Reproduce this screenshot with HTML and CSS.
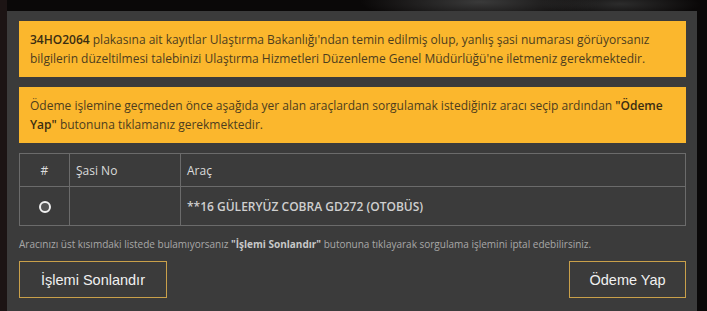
FILE: index.html
```html
<!DOCTYPE html>
<html lang="tr">
  <head>
    <meta charset="UTF-8" />
    <meta name="viewport" content="width=device-width, initial-scale=1.0" />
    <title>Ödeme</title>
    <link rel="stylesheet" href="styles.css">
  </head>
  <body>
    <div class="modal">
      <div class="notice">
        <b>34HO2064</b> plakasına ait kayıtlar Ulaştırma Bakanlığı'ndan temin edilmiş olup, yanlış şasi numarası görüyorsanız
        bilgilerin düzeltilmesi talebinizi Ulaştırma Hizmetleri Düzenleme Genel Müdürlüğü'ne iletmeniz gerekmektedir.
      </div>
      <div class="notice">
        Ödeme işlemine geçmeden önce aşağıda yer alan araçlardan sorgulamak istediğiniz aracı seçip ardından <b>"Ödeme
        Yap"</b> butonuna tıklamanız gerekmektedir.
      </div>
      <table class="vehicles">
        <tr>
          <th class="sel">#</th>
          <th class="chassis">Şasi No</th>
          <th>Araç</th>
        </tr>
        <tr>
          <td class="sel"><span class="radio"></span></td>
          <td></td>
          <td class="car">**16 GÜLERYÜZ COBRA GD272 (OTOBÜS)</td>
        </tr>
      </table>
      <p class="hint">Aracınızı üst kısımdaki listede bulamıyorsanız <b>"İşlemi Sonlandır"</b> butonuna tıklayarak sorgulama işlemini iptal edebilirsiniz.</p>
      <div class="actions">
        <button class="btn btn-cancel">İşlemi Sonlandır</button>
        <button class="btn btn-pay">Ödeme Yap</button>
      </div>
    </div>
  </body>
</html>
```

FILE: styles.css
```css
body,
html {
  height: 100%;
  margin: 0;
}

body {
  background-color: #080808;
  background-image: radial-gradient(ellipse 120px 20px at 480px 2px, #3a3a3a, transparent),
    radial-gradient(ellipse 80px 14px at 620px 4px, #2c2c2c, transparent),
    linear-gradient(to right, #1c1414 7px, #0a0808 7px);
  font-family: "Open Sans", "Noto Sans", sans-serif;
  overflow: hidden;
}

.modal {
  box-sizing: border-box;
  width: 690px;
  height: 300px;
  margin: 11px 0 0 7px;
  padding: 10px 11px 0 12px;
  background-color: #3b3b3b;
}

.notice {
  box-sizing: border-box;
  height: 56px;
  background-color: #fbb72d;
  color: #4d3d1e;
  font-size: 12px;
  line-height: 19px;
  padding: 9px 11px;
  margin-bottom: 10px;
}

.notice b {
  font-weight: 600;
  color: #3a2d12;
}

.vehicles {
  width: 100%;
  border-collapse: collapse;
  color: #dcdcdc;
  font-size: 12px;
}

.vehicles th,
.vehicles td {
  border: 1px solid #6b6b6b;
  text-align: left;
  font-weight: normal;
  padding: 0 6px;
}

.vehicles th {
  height: 32px;
}

.vehicles td {
  height: 38px;
}

.vehicles .sel {
  width: 37px;
  text-align: center;
}

.vehicles .chassis {
  width: 98px;
}

.vehicles .car {
  font-weight: 600;
  color: #cfcfcf;
}

.radio {
  display: inline-block;
  box-sizing: border-box;
  width: 12px;
  height: 12px;
  border: 2px solid #f0f0f0;
  border-radius: 50%;
  background-color: #555;
  vertical-align: middle;
}

.hint {
  margin: 11px 0 0;
  font-size: 10px;
  color: #a8a8a8;
}

.hint b {
  color: #c8c8c8;
}

.actions {
  display: flex;
  justify-content: space-between;
  margin-top: 10px;
}

.btn {
  height: 37px;
  padding: 0;
  background-color: transparent;
  border: 1px solid #c9a04a;
  border-radius: 0;
  color: #f0f0f0;
  font-family: "Liberation Sans", Arial, sans-serif;
  font-size: 14.5px;
}

.btn-cancel {
  width: 148px;
}

.btn-pay {
  width: 117px;
}
```
